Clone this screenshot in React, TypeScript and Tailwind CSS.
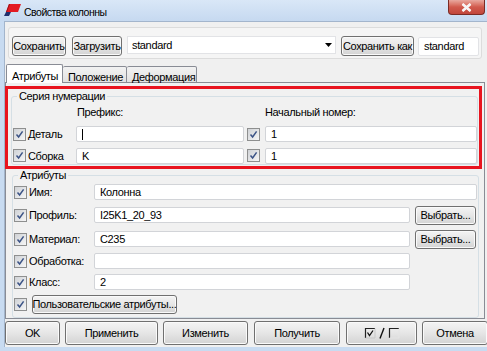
import React from 'react';

const Check = () => (
  <span className="w-[13px] h-[13px] shrink-0 border border-[#8e8f8f] bg-gradient-to-br from-[#cfd2d6] to-[#f6f6f6] flex items-center justify-center">
    <svg width="9" height="9" viewBox="0 0 9 9">
      <path d="M1.5 4.6 L3.6 7 L7.6 1.4" stroke="#3b5386" strokeWidth="1.5" fill="none" />
    </svg>
  </span>
);

const Btn = ({ className = '', children }: { className?: string; children: React.ReactNode }) => (
  <button
    className={`shrink-0 flex items-center justify-center whitespace-nowrap border border-[#707070] rounded-[3px] bg-gradient-to-b from-[#f4f4f4] via-[#e6e6e6] to-[#d3d3d3] shadow-[inset_0_0_0_1px_#fafafa] leading-none ${className}`}
  >
    {children}
  </button>
);

const Field = ({ className = '', value = '' }: { className?: string; value?: string }) => (
  <div className={`shrink-0 flex items-center bg-white border border-[#d2d4d8] rounded-[2px] pl-[5px] ${className}`}>
    {value}
  </div>
);

const AttrRow = ({ label, value, wide, pick, className = '' }: { label: string; value: string; wide?: boolean; pick?: boolean; className?: string }) => (
  <div className={`flex items-center ${className}`}>
    <div className="ml-[1px]">
      <Check />
    </div>
    <span className="ml-[2px] w-[65px]">{label}</span>
    <Field className={`${wide ? 'w-[383px]' : 'w-[316px]'} h-[16px]`} value={value} />
    {pick && <Btn className="ml-[5px] w-[61px] h-[19px]">Выбрать...</Btn>}
  </div>
);

export default function App() {
  return (
    <div className="w-[487px] h-[351px] overflow-hidden whitespace-nowrap flex flex-col bg-[#c8dbf1] text-black text-[11px] tracking-[-0.35px] [font-family:'Segoe_UI','Liberation_Sans',Arial,sans-serif]">
      {/* title bar */}
      <div className="h-[21px] shrink-0 flex items-start bg-gradient-to-b from-[#d9e7f7] to-[#c6d9f0]">
        <svg className="ml-[4px] mt-[4px]" width="17" height="12" viewBox="0 0 17 12">
          <polygon points="5,0 17,0 14,8 2,8" fill="#e31b23" />
          <polygon points="2,8 7,8 5,12 0,12" fill="#1f2f6e" />
          <polygon points="5,0 6,0 3,8 2,8" fill="#9b1016" />
        </svg>
        <span className="ml-[3px] mt-[5px] text-[10.5px] tracking-[-0.5px]">Свойства колонны</span>
        <div className="ml-auto mr-[2px] w-[37px] h-[15px] flex items-center justify-center rounded-b-[4px] border border-t-0 border-[#7b2b25] bg-gradient-to-b from-[#e8a89f] via-[#d15a4d] to-[#c1463c]">
          <svg width="11" height="9" viewBox="0 0 11 9">
            <path d="M1.5 1 L9.5 8 M9.5 1 L1.5 8" stroke="#ffffff" strokeWidth="2.4" />
            <path d="M1.5 1 L9.5 8 M9.5 1 L1.5 8" stroke="#f4f4f4" strokeWidth="1.2" />
          </svg>
        </div>
      </div>

      {/* client area */}
      <div className="flex-1 ml-[4px] mb-[4px] flex flex-col bg-[#f0f0f0] border-l border-t border-[#a3b5cc]">
        {/* toolbar */}
        <div className="mt-[5px] ml-[3px] w-[474px] h-[32px] shrink-0 flex items-start pt-[8px] pl-[3px] bg-[#f5f5f5] border border-[#dcdcdc] rounded-[3px]">
          <Btn className="w-[54px] h-[20px]">Сохранить</Btn>
          <Btn className="ml-[6px] w-[50px] h-[20px]">Загрузить</Btn>
          <div className="ml-[5px] w-[209px] h-[18px] flex items-center bg-white border border-[#e2e3e6] pl-[4px]">
            <span>standard</span>
            <svg className="ml-auto mr-[3px]" width="7" height="4" viewBox="0 0 7 4">
              <polygon points="0,0 7,0 3.5,4" fill="#000" />
            </svg>
          </div>
          <Btn className="ml-[5px] w-[73px] h-[20px]">Сохранить как</Btn>
          <Field className="ml-[4px] mt-[1px] w-[61px] h-[19px] border-[#e2e3e6]" value="standard" />
        </div>

        {/* tabs */}
        <div className="mt-[5px] ml-[1px] h-[19px] shrink-0 flex items-end relative z-10">
          <div className="w-[57px] h-[19px] pl-[5px] pt-[3px] bg-white border border-b-0 border-[#898c95] rounded-t-[2px]">Атрибуты</div>
          <div className="w-[64px] h-[17px] pl-[5px] pt-[2px] border border-l-0 border-[#898c95] rounded-t-[2px] bg-gradient-to-b from-[#f2f2f2] to-[#e2e2e2]">Положение</div>
          <div className="w-[70px] h-[17px] pl-[5px] pt-[2px] border border-l-0 border-[#898c95] rounded-t-[2px] bg-gradient-to-b from-[#f2f2f2] to-[#e2e2e2]">Деформация</div>
        </div>

        {/* tab panel */}
        <div className="-mt-[1px] w-[480px] h-[237px] shrink-0 flex flex-col border border-[#898c95] bg-[#f1f1f1]">
          {/* highlighted numbering group */}
          <div className="mt-[3px] -ml-[1px] w-[477px] h-[83px] shrink-0 border-[3px] border-[#e8141f] flex flex-col">
            <fieldset className="ml-[3px] mt-[1px] w-[466px] h-[75px] border border-[#d5dfe5] rounded-[3px] flex flex-col">
              <legend className="ml-[5px] px-[2px] leading-[13px]">Серия нумерации</legend>
              <div className="mt-[3px] h-[13px] flex items-center">
                <span className="ml-[65px] w-[188px]">Префикс:</span>
                <span>Начальный номер:</span>
              </div>
              <div className="mt-[7px] flex items-center">
                <div className="ml-[1px]"><Check /></div>
                <span className="ml-[2px] w-[48px]">Деталь</span>
                <div className="w-[168px] h-[16px] bg-white border border-[#d2d4d8] rounded-[2px] flex items-center pl-[5px]">
                  <span className="w-[1px] h-[11px] bg-black" />
                </div>
                <div className="ml-[3px]"><Check /></div>
                <Field className="ml-[5px] w-[212px] h-[16px]" value="1" />
              </div>
              <div className="mt-[5px] flex items-center">
                <div className="ml-[1px]"><Check /></div>
                <span className="ml-[2px] w-[48px]">Сборка</span>
                <Field className="w-[168px] h-[16px]" value="K" />
                <div className="ml-[3px]"><Check /></div>
                <Field className="ml-[5px] w-[212px] h-[16px]" value="1" />
              </div>
            </fieldset>
          </div>

          {/* attributes group */}
          <fieldset className="ml-[6px] w-[467px] h-[149px] border border-[#d5dfe5] rounded-[3px] flex flex-col">
            <legend className="ml-[5px] px-[2px] leading-[13px]">Атрибуты</legend>
            <AttrRow className="mt-[2px] h-[16px]" label="Имя:" value="Колонна" wide />
            <AttrRow className="mt-[6px] h-[18px]" label="Профиль:" value="I25K1_20_93" pick />
            <AttrRow className="mt-[6px] h-[18px]" label="Материал:" value="C235" pick />
            <AttrRow className="mt-[5px] h-[16px]" label="Обработка:" value="" />
            <AttrRow className="mt-[5px] h-[16px]" label="Класс:" value="2" />
            <div className="mt-[5px] h-[19px] flex items-center">
              <div className="ml-[1px]"><Check /></div>
              <Btn className="ml-[5px] w-[145px] h-[19px]">Пользовательские атрибуты...</Btn>
            </div>
          </fieldset>
        </div>

        {/* bottom buttons */}
        <div className="mt-[2px] flex items-start">
          <Btn className="w-[55px] h-[24px]">OK</Btn>
          <Btn className="ml-[5px] w-[93px] h-[24px]">Применить</Btn>
          <Btn className="ml-[5px] w-[85px] h-[24px]">Изменить</Btn>
          <Btn className="ml-[6px] w-[86px] h-[24px]">Получить</Btn>
          <Btn className="ml-[6px] w-[71px] h-[24px]">
            <svg width="36" height="12" viewBox="0 0 36 12">
              <path d="M1.5 11 V1.5 H11" stroke="#222" strokeWidth="1.2" fill="none" />
              <path d="M11 1.5 V11 H1.5" stroke="#c8c8c8" strokeWidth="1" fill="none" />
              <path d="M3.5 5.5 L5.5 8.5 L9 3.5" stroke="#111" strokeWidth="1.3" fill="none" />
              <path d="M20 1 L16 11.5" stroke="#111" strokeWidth="1.4" />
              <path d="M25.5 11 V1.5 H35" stroke="#222" strokeWidth="1.2" fill="none" />
              <path d="M35 1.5 V11 H25.5" stroke="#e4e4e4" strokeWidth="1" fill="none" />
            </svg>
          </Btn>
          <Btn className="ml-[5px] w-[66px] h-[24px]">Отмена</Btn>
        </div>
      </div>
    </div>
  );
}
